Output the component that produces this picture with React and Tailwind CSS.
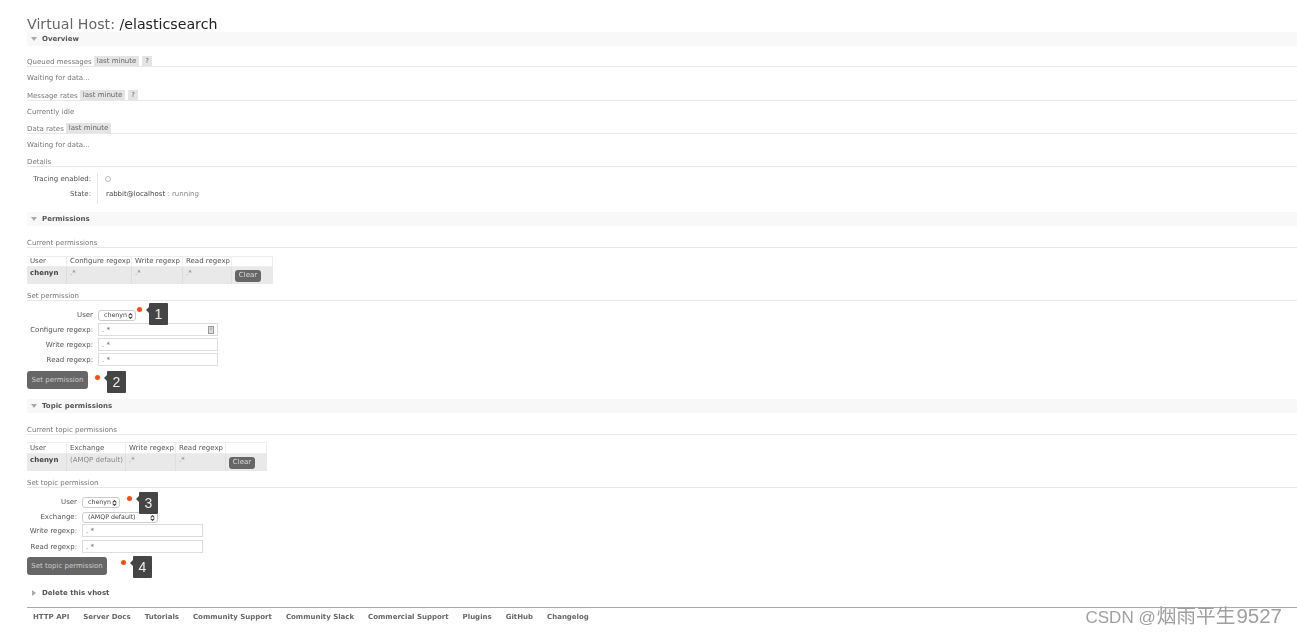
import { ChevronsUpDown } from 'lucide-react';

const SectionBar = ({ title, open = true, className = '' }) => (
  <div className={`h-[14px] flex items-center pl-[4px] gap-[6px] font-bold text-[#555] ${className}`}>
    <span className="w-[5px] flex justify-center">
      {open ? (
        <span className="w-0 h-0 border-x-[3px] border-x-transparent border-t-[4px] border-t-[#aaa]" />
      ) : (
        <span className="w-0 h-0 border-y-[3px] border-y-transparent border-l-[4px] border-l-[#aaa]" />
      )}
    </span>
    {title}
  </div>
);

const Tag = ({ children }) => (
  <span className="bg-[#e4e4e4] h-[10px] flex items-center px-[3px] text-[#666]">{children}</span>
);

const Heading = ({ children, tags, className = '' }) => (
  <div className={`h-[17px] border-b border-[#e8e8e8] flex items-end gap-[2px] text-[#777] ${className}`}>
    <span>{children}</span>
    {tags && <div className="flex gap-[3px]">{tags}</div>}
  </div>
);

const Note = ({ children, className = '' }) => <div className={`pt-[8px] text-[#777] ${className}`}>{children}</div>;

// red dot + numbered callout sitting over the form
const Callout = ({ n, className = '' }) => (
  <div className={`absolute z-10 flex items-start ${className}`}>
    <span className="w-[5px] h-[5px] rounded-full bg-[#ff4a12] mt-[4px]" />
    <span className="ml-[4px] mt-[4px] w-0 h-0 border-y-[3px] border-y-transparent border-r-[3px] border-r-[#454545]" />
    <span className="w-[19px] h-[22px] bg-[#454545] rounded-[1px] flex items-center justify-center text-[#eee] text-[14px] font-['Liberation_Sans',sans-serif]">
      {n}
    </span>
  </div>
);

const PermTable = ({ cols, row, widths, headClass }) => (
  <div className="text-[#555] w-fit">
    <div className={`flex items-center border-y border-[#eee] ${headClass}`}>
      {cols.map((c, i) => (
        <div key={i} className="h-full flex items-center pl-[3px] border-r border-[#eee]" style={{ width: widths[i] }}>
          {c}
        </div>
      ))}
    </div>
    <div className="flex h-[17px] bg-[#e9e9e9]">
      {row.map((c, i) => (
        <div
          key={i}
          className={`h-full pl-[3px] pt-[3px] border-r border-[#dedede] ${i === 0 ? 'font-bold text-[#444]' : 'text-[#888]'}`}
          style={{ width: widths[i] }}
        >
          {c}
        </div>
      ))}
      <div className="h-full flex items-center pl-[3px]" style={{ width: widths[widths.length - 1] }}>
        <span className="h-[12px] w-[26px] rounded-[3px] bg-[#666] text-[#ddd] flex items-center justify-center">Clear</span>
      </div>
    </div>
  </div>
);

const FormRow = ({ label, labelWidth, children, className = '', labelClass = '' }) => (
  <div className={`flex items-center gap-[5px] ${className}`}>
    <div className={`text-right text-[#555] shrink-0 ${labelClass}`} style={{ width: labelWidth }}>{label}</div>
    {children}
  </div>
);

const TextBox = ({ width, hint }) => (
  <div className="h-[13px] bg-white border border-[#ddd] flex items-center justify-between pl-[3px] pr-[3px] text-[#666]" style={{ width }}>
    <span className="pt-[2px]">. *</span>
    {hint && <span className="w-[6px] h-[8px] border border-[#999] bg-[#ddd] text-[5px] leading-none text-center text-[#555]">!</span>}
  </div>
);

const Select = ({ children, width }) => (
  <div className="h-[11px] bg-white border border-[#ccc] rounded-[3px] flex items-center justify-between pl-[5px] pr-[1px] text-[6.3px] text-[#444]" style={{ width }}>
    {children}
    <ChevronsUpDown className="w-[7px] h-[8px] shrink-0 text-[#444]" strokeWidth={4} />
  </div>
);

const DarkButton = ({ children, width }) => (
  <div className="h-[18px] rounded-[3px] bg-[#666] text-[#ccc] flex items-center justify-center" style={{ width }}>
    {children}
  </div>
);

const footerLinks = ['HTTP API', 'Server Docs', 'Tutorials', 'Community Support', 'Community Slack', 'Commercial Support', 'Plugins', 'GitHub', 'Changelog'];

export default function App() {
  return (
    <div className="relative w-[1297px] h-[636px] overflow-hidden bg-white pl-[27px] font-['DejaVu_Sans',sans-serif] text-[7px] leading-none">
      <div className="blur-[0.45px]">
        <h1 className="h-[32px] pt-[16px] text-[14.2px] leading-[16px] text-[#666]">
          Virtual Host: <span className="text-[#222]">/elasticsearch</span>
        </h1>

        <SectionBar title="Overview" className="bg-[#f8f8f8]" />
        <div className="mt-[4px]">
          <Heading tags={<><Tag>last minute</Tag><Tag>?</Tag></>}>Queued messages</Heading>
          <Note className="h-[17px]">Waiting for data...</Note>
          <Heading tags={<><Tag>last minute</Tag><Tag>?</Tag></>}>Message rates</Heading>
          <Note className="h-[16px]">Currently idle</Note>
          <Heading tags={<Tag>last minute</Tag>}>Data rates</Heading>
          <Note className="h-[16px]">Waiting for data...</Note>
          <Heading>Details</Heading>
        </div>
        <div className="flex mt-[6px] h-[31px]">
          <div className="w-[64px] pt-[3px] text-right text-[#555] flex flex-col gap-[8px]">
            <div>Tracing enabled:</div>
            <div>State:</div>
          </div>
          <div className="ml-[6px] border-l border-[#e6e6e6] pl-[8px] pt-[3px] flex flex-col gap-[8px]">
            <div className="h-[7px] flex items-center">
              <span className="w-[6px] h-[6px] rounded-full border border-[#bbb] ml-[-1px] mt-[-2px]" />
            </div>
            <div className="text-[#888]"><span className="text-[#444]">rabbit@localhost</span> : running</div>
          </div>
        </div>

        <SectionBar title="Permissions" className="mt-[8px] bg-[#f8f8f8]" />
        <Heading className="mt-[5px]">Current permissions</Heading>
        <div className="mt-[8px]">
          <PermTable
            headClass="h-[11px]"
            cols={['User', 'Configure regexp', 'Write regexp', 'Read regexp', '']}
            row={['chenyn', '.*', '.*', '.*']}
            widths={[40, 65, 51, 49, 41]}
          />
        </div>
        <Heading>Set permission</Heading>
        <div className="relative mt-[9px] flex flex-col gap-[2px]">
          <FormRow label="User" labelWidth={66}><Select width={38}>chenyn</Select></FormRow>
          <Callout n="1" className="left-[110px] top-[-7px]" />
          <FormRow label="Configure regexp:" labelWidth={66} labelClass="pt-[2px]"><TextBox width={120} hint /></FormRow>
          <FormRow label="Write regexp:" labelWidth={66} labelClass="pt-[2px]"><TextBox width={120} /></FormRow>
          <FormRow label="Read regexp:" labelWidth={66} labelClass="pt-[2px]"><TextBox width={120} /></FormRow>
        </div>
        <div className="relative mt-[5px]">
          <DarkButton width={61}>Set permission</DarkButton>
          <Callout n="2" className="left-[68px] top-0" />
        </div>

        <SectionBar title="Topic permissions" className="mt-[10px] bg-[#f8f8f8]" />
        <Heading className="mt-[5px]">Current topic permissions</Heading>
        <div className="mt-[7px]">
          <PermTable
            headClass="h-[12px]"
            cols={['User', 'Exchange', 'Write regexp', 'Read regexp', '']}
            row={['chenyn', '(AMQP default)', '.*', '.*']}
            widths={[40, 59, 50, 50, 41]}
          />
        </div>
        <Heading>Set topic permission</Heading>
        <div className="relative mt-[9px]">
          <FormRow label="User" labelWidth={50}><Select width={38}>chenyn</Select></FormRow>
          <Callout n="3" className="left-[100px] top-[-5px]" />
          <FormRow label="Exchange:" labelWidth={50} className="mt-[4px]"><Select width={76}>(AMQP default)</Select></FormRow>
          <FormRow label="Write regexp:" labelWidth={50} className="mt-[1px]" labelClass="pt-[2px]"><TextBox width={121} /></FormRow>
          <FormRow label="Read regexp:" labelWidth={50} className="mt-[3px]" labelClass="pt-[2px]"><TextBox width={121} /></FormRow>
        </div>
        <div className="relative mt-[4px]">
          <DarkButton width={80}>Set topic permission</DarkButton>
          <Callout n="4" className="left-[94px] top-[-1px]" />
        </div>

        <SectionBar title="Delete this vhost" open={false} className="mt-[11px]" />

        <div className="mt-[7px] border-t border-[#aaa] flex gap-[14px] pl-[6px] pt-[6px] font-bold text-[#666]">
          {footerLinks.map((l) => <span key={l}>{l}</span>)}
        </div>
      </div>

      <div className="absolute right-[15px] bottom-[9px] flex items-baseline leading-none text-[#a0a0a0] font-['Liberation_Sans','Noto_Sans_CJK_SC',sans-serif]">
        <span className="text-[17px] whitespace-pre mr-[1px]">CSDN @</span>
        <span className="text-[19.7px] mr-[1px]">烟雨平生</span>
        <span className="text-[20.5px]">9527</span>
      </div>
    </div>
  );
}
